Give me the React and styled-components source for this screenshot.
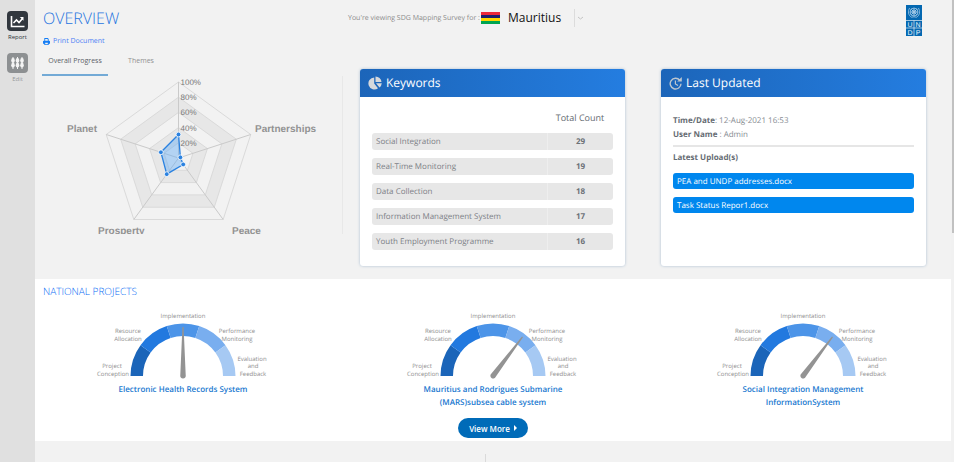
import React from "react";
import styled, { createGlobalStyle } from "styled-components";

const GlobalStyle = createGlobalStyle`
  * { box-sizing: border-box; }
  body {
    margin: 0;
    background: #f2f2f2;
    font-family: "Open Sans", "Noto Sans", sans-serif;
    color: #7c8086;
    overflow: hidden;
    text-rendering: geometricPrecision;
  }
  button, select { font-family: inherit; }
`;

const Page = styled.div`
  display: grid;
  grid-template-columns: 35px 1fr 3px;
  height: 100vh;
  overflow: hidden;
`;

const Sidebar = styled.nav`
  background: #e0e0e0;
  padding-top: 11px;
  display: flex;
  flex-direction: column;
  align-items: center;
  gap: 11px;
`;

const NavButton = styled.button`
  border: 0;
  padding: 0;
  background: none;
  display: flex;
  flex-direction: column;
  align-items: center;
  gap: 2px;
  font-size: 6px;
  line-height: 9px;
  color: ${(p) => (p.$active ? "#2f343a" : "#97999b")};
`;

const NavTile = styled.span`
  display: grid;
  place-items: center;
  width: 21px;
  height: 20px;
  border-radius: 4px;
  background: ${(p) => (p.$active ? "#31373e" : "#8d9092")};
`;

const Main = styled.main`
  min-width: 0;
  display: flex;
  flex-direction: column;
`;

const Columns = styled.div`
  display: grid;
  grid-template-columns: repeat(3, 1fr);
  padding: 0 6px 0 7px;
`;

const Header = styled(Columns)`
  height: 49px;
  flex: none;
`;

const TitleBlock = styled.div`
  padding: 8px 0 0 1px;
`;

const Title = styled.h1`
  margin: 0;
  font-weight: 300;
  font-size: 16px;
  line-height: 20px;
  color: #1f74e0;
`;

const PrintLink = styled.a`
  display: flex;
  align-items: center;
  gap: 3px;
  margin-top: 7px;
  font-size: 7px;
  line-height: 13px;
  color: #4b7df5;
  text-decoration: none;
`;

const CountryPicker = styled.div`
  display: flex;
  align-items: center;
  align-self: start;
  height: 35px;
  padding-left: 5px;
  white-space: nowrap;
`;

const PickerLabel = styled.label`
  font-size: 7px;
  width: 133px;
  line-height: 12px;
  padding-top: 2px;
  color: #8b8b8b;
`;

const CountrySelect = styled.select`
  appearance: none;
  border: 0;
  border-right: 1px solid #dcdcdc;
  background: transparent;
  height: 18px;
  width: 69px;
  margin: 0 3px 0 6px;
  padding: 0 0 0 2px;
  font-size: 12px;
  color: #111;
`;

const LogoSlot = styled.div`
  display: flex;
  justify-content: flex-end;
  padding: 5px 23px 0 0;
`;

const Overview = styled(Columns)`
  height: 230px;
  flex: none;
`;

const ChartPanel = styled.section`
  display: flex;
  flex-direction: column;
`;

const Tabs = styled.div`
  display: flex;
`;

const Tab = styled.button`
  border: 0;
  border-bottom: 2px solid ${(p) => (p.$active ? "#73aad6" : "transparent")};
  background: none;
  width: 66px;
  height: 27px;
  padding: 0 0 2px;
  font-size: 7px;
  color: ${(p) => (p.$active ? "#5b6168" : "#919191")};
`;

const RadarFrame = styled.div`
  height: 158px;
  overflow: hidden;
  border-right: 1px solid #e8e8e8;
`;

const Card = styled.section`
  margin: 20px 19px 0 17px;
  height: 197px;
  display: flex;
  flex-direction: column;
  background: #fff;
  border-radius: 3px;
  box-shadow: 0 0 3px #a9bdd2;
  overflow: hidden;
`;

const CardHeader = styled.header`
  display: flex;
  align-items: center;
  gap: 4px;
  height: 28px;
  flex: none;
  padding-left: 8px;
  background: linear-gradient(90deg, #1c65b9, #247de0);
  color: #fff;
`;

const CardTitle = styled.h2`
  margin: 0;
  font-size: 12px;
  line-height: 16px;
  font-weight: 400;
`;

const KeywordTable = styled.table`
  flex: none;
  width: auto;
  margin: 4px 12px 0;
  border-collapse: separate;
  border-spacing: 0 8px;
  font-size: 8px;
  line-height: 15px;
`;

const HeadCell = styled.th`
  width: ${(p) => p.$width || "auto"};
  height: 16px;
  padding: 0;
  font-weight: 400;
  font-size: 9px;
  color: #666c73;
`;

const KeywordCell = styled.td`
  padding: 1px 4px;
  background: #e7e7e7;
  border-radius: 3px 0 0 3px;
`;

const CountCell = styled.td`
  padding: 1px 0;
  background: #e7e7e7;
  border-left: 1px solid #eee;
  border-radius: 0 3px 3px 0;
  text-align: center;
  font-weight: 700;
  color: #6c7177;
`;

const UpdateBody = styled.div`
  padding: 17px 12px;
  font-size: 8px;
`;

const UpdateLine = styled.p`
  margin: 0;
  line-height: 14px;
  color: #868b91;
  b { color: #666c73; }
`;

const Divider = styled.hr`
  margin: 3px 0 4px;
  border: 0;
  height: 2px;
  background: #e6e6e6;
`;

const UploadList = styled.div`
  display: flex;
  flex-direction: column;
  gap: 8px;
  margin-top: 8px;
`;

const UploadLink = styled.a`
  height: 16px;
  padding: 0 4px;
  border-radius: 3px;
  background: #0087ee;
  color: #fff;
  font-size: 8px;
  line-height: 17px;
  text-decoration: none;
`;

const Projects = styled.section`
  background: #fff;
  flex: none;
  height: 162px;
  display: flex;
  flex-direction: column;
`;

const ProjectsTitle = styled.h2`
  margin: 4px 0 0 8px;
  font-size: 10px;
  line-height: 16px;
  font-weight: 300;
  color: #0a6df5;
`;

const GaugeRow = styled.div`
  display: grid;
  grid-template-columns: repeat(3, 1fr);
  gap: 20px;
  padding: 10px 3px 0;
  height: 119px;
`;

const GaugeItem = styled.article`
  display: flex;
  flex-direction: column;
  align-items: center;
`;

const GaugeTitle = styled.h3`
  margin: 3px 0 0;
  width: 146px;
  text-align: center;
  font-size: 8px;
  line-height: 13px;
  font-weight: 600;
  color: #1978cf;
`;

const MoreButton = styled.button`
  align-self: center;
  display: flex;
  align-items: center;
  justify-content: center;
  gap: 4px;
  width: 70px;
  height: 20px;
  flex: none;
  border: 0;
  border-radius: 10px;
  background: #006bb8;
  color: #fff;
  font-size: 8px;
  font-weight: 600;
`;

const Below = styled.div`
  flex: 1;
  display: grid;
  grid-template-columns: 451px 1fr;
  padding-top: 13px;
`;

const BelowPanel = styled.div`
  border-right: 1px solid #dadada;
`;

const ScrollTrack = styled.div`
  background: #f1f1f1;
  padding-left: 1px;
`;

const ScrollThumb = styled.div`
  height: 233px;
  background: #c1c1c1;
`;

function point(cx, cy, r, deg) {
  const a = (deg * Math.PI) / 180;
  return [cx + r * Math.sin(a), cy - r * Math.cos(a)];
}

function ring(cx, cy, r) {
  return [0, 1, 2, 3, 4].map((i) => point(cx, cy, r, i * 72).join(",")).join(" ");
}

function Radar() {
  const cx = 136.5;
  const cy = 82;
  const values = [23.5, 2, 8, 20, 18.5];
  const dots = values.map((v, i) => point(cx, cy, v, i * 72));
  return (
    <svg width="290" height="168" role="img" aria-label="Overall progress" fontFamily="'Liberation Sans', Arial, sans-serif">
      {[5, 4, 3, 2, 1].map((n) => (
        <polygon
          key={n}
          points={ring(cx, cy, n * 15.2)}
          fill={n % 2 ? "#f2f2f2" : "#e7e7e7"}
          stroke="#dadada"
        />
      ))}
      {[0, 1, 2, 3, 4].map((i) => {
        const [x, y] = point(cx, cy, 76, i * 72);
        return <line key={i} x1={cx} y1={cy} x2={x} y2={y} stroke="#cacaca" strokeWidth="1" />;
      })}
      <polygon points={dots.map((d) => d.join(",")).join(" ")} fill="#67aef3" fillOpacity="0.45" stroke="#2b82e0" strokeWidth="1.3" />
      {dots.map(([x, y], i) => (
        <circle key={i} cx={x} cy={y} r="2.4" fill="#2b82e0" stroke="#fff" strokeWidth="0.8" />
      ))}
      <g fontSize="8" fill="#777">
        {["20%", "40%", "60%", "80%", "100%"].map((t, i) => (
          <text key={t} x={cx + 2} y={cy + 3 - (i + 1) * 15.2}>{t}</text>
        ))}
      </g>
      <g fontSize="10" fontWeight="700" fill="#929292">
        <text x="55" y="56" textAnchor="end">Planet</text>
        <text x="213" y="56">Partnerships</text>
        <text x="56" y="158">Prosperty</text>
        <text x="190" y="158">Peace</text>
      </g>
    </svg>
  );
}

const SEGMENTS = ["#1b65b9", "#2279df", "#4c94e8", "#79aeef", "#a6c9f3"];

function Gauge({ angle, name }) {
  const cx = 90;
  const cy = 67;
  return (
    <svg width="180" height="71" role="img" aria-label={name}>
      {SEGMENTS.map((fill, i) => {
        const a = -90 + i * 36;
        const [x1, y1] = point(cx, cy, 52.5, a);
        const [x2, y2] = point(cx, cy, 52.5, a + 36);
        const [x3, y3] = point(cx, cy, 40, a + 36);
        const [x4, y4] = point(cx, cy, 40, a);
        return (
          <path
            key={fill}
            d={`M${x1} ${y1}A52.5 52.5 0 0 1 ${x2} ${y2}L${x3} ${y3}A40 40 0 0 0 ${x4} ${y4}Z`}
            fill={fill}
          />
        );
      })}
      <path
        transform={`rotate(${angle} ${cx} ${cy})`}
        d="M89.4 18h1.2l2.1 48a2.8 2.8 0 1 1-5.4 0z"
        fill="#939393"
      />
      <g fontSize="6" fill="#8d8d8d" textAnchor="middle">
        <text x="90" y="9">Implementation</text>
        <text x="35" y="24">Resource</text>
        <text x="35" y="32">Allocation</text>
        <text x="144" y="24">Performance</text>
        <text x="144" y="32">Monitoring</text>
        <text x="19" y="59">Project</text>
        <text x="20" y="67">Conception</text>
        <text x="159" y="52">Evaluation</text>
        <text x="160" y="59">and</text>
        <text x="160" y="67">Feedback</text>
      </g>
    </svg>
  );
}

function ReportIcon() {
  return (
    <svg width="15" height="13" viewBox="0 0 15 13" fill="none" stroke="#fff" strokeWidth="1.6">
      <path d="M1.5 1v10.5h13M3.5 8l3-3 2.5 2.5 3.5-4" />
      <path d="M9.8 2h3.7v3.7z" fill="#fff" stroke="none" />
    </svg>
  );
}

function EditIcon() {
  return (
    <svg width="15" height="14" viewBox="0 0 15 14" fill="#f4f4f4">
      {[3, 7.5, 12].map((x) => (
        <g key={x}>
          <rect x={x - 0.5} y="1" width="1" height="12" />
          <ellipse cx={x} cy="4.5" rx="1.8" ry="2.4" />
          <ellipse cx={x} cy="9.2" rx="1.8" ry="2.4" />
        </g>
      ))}
    </svg>
  );
}

function PrinterIcon() {
  return (
    <svg width="7" height="7" viewBox="0 0 16 16" fill="#147df5">
      <path d="M3 0h8l2 2v4h-2V3h-1V2H5v4H3zM2 6h12a2 2 0 0 1 2 2v5h-3v3H3v-3H0V8a2 2 0 0 1 2-2zm3 5v3h6v-3z" />
    </svg>
  );
}

function Flag() {
  return (
    <svg width="19" height="12" viewBox="0 0 19 12" role="img" aria-label="Flag of Mauritius">
      <path fill="#ea2839" d="M0 0h19v3H0z" />
      <path fill="#1a206d" d="M0 3h19v3H0z" />
      <path fill="#ffd500" d="M0 6h19v3H0z" />
      <path fill="#00a551" d="M0 9h19v3H0z" />
    </svg>
  );
}

function UndpLogo() {
  return (
    <svg width="16" height="31" viewBox="0 0 16 31" role="img" aria-label="UNDP">
      <path fill="#0468b1" d="M0 0h16v31H0z" />
      <g fill="none" stroke="#b9d7ee" strokeWidth="0.7">
        <circle cx="8" cy="7" r="4" />
        <circle cx="8" cy="7" r="2" />
        <path d="M4 7h8M8 3v8M5.2 4.2l5.6 5.6M10.8 4.2L5.2 9.8" />
        <path d="M3.6 3C1.8 6 2 10.2 5.4 12.2L8 11.8l2.6.4C14 10.2 14.2 6 12.4 3" />
        <path d="M0 15.5h16M0 23h16M8 15.5v15.5" stroke="#e5f0f8" />
      </g>
      <g fontSize="7" fill="#e8f2fa" textAnchor="middle" fontFamily="'Liberation Sans', sans-serif">
        <text x="4" y="22">U</text>
        <text x="12" y="22">N</text>
        <text x="4" y="30">D</text>
        <text x="12" y="30">P</text>
      </g>
    </svg>
  );
}

function PieIcon() {
  return (
    <svg width="14" height="14" viewBox="0 0 14 14" fill="#d5d8dc">
      <path d="M6.2 1.4v6l3.8 4.8A6 6 0 1 1 6.2 1.4z" />
      <path d="M7.5 0.5a6 6 0 0 1 6 5.5h-6z" />
      <path d="M8 7.2h5.8a6 6 0 0 1-2.3 4.2z" />
    </svg>
  );
}

function HistoryIcon() {
  return (
    <svg width="13" height="13" viewBox="0 0 13 13" fill="none" stroke="#bcc6d0" strokeWidth="1.4">
      <path d="M10.8 3.2A5.4 5.4 0 1 0 12 6.8" />
      <path d="M6.4 3.6v3.3l2.6 1.6" strokeWidth="1.2" />
      <path d="M12.8 0v4.6H8.2z" fill="#bcc6d0" stroke="none" />
    </svg>
  );
}

const KEYWORDS = [
  ["Social Integration", 29],
  ["Real-Time Monitoring", 19],
  ["Data Collection", 18],
  ["Information Management System", 17],
  ["Youth Employment Programme", 16],
];

const PROJECTS = [
  { name: "Electronic Health Records System", angle: 0 },
  { name: "Mauritius and Rodrigues Submarine (MARS)subsea cable system", angle: 37 },
  { name: "Social Integration Management InformationSystem", angle: 37 },
];

export default function App() {
  return (
    <Page>
      <GlobalStyle />
      <Sidebar>
        <NavButton $active>
          <NavTile $active><ReportIcon /></NavTile>
          Report
        </NavButton>
        <NavButton>
          <NavTile><EditIcon /></NavTile>
          Edit
        </NavButton>
      </Sidebar>
      <Main>
        <Header as="header">
          <TitleBlock>
            <Title>OVERVIEW</Title>
            <PrintLink href="#print"><PrinterIcon />Print Document</PrintLink>
          </TitleBlock>
          <CountryPicker>
            <PickerLabel htmlFor="country">You're viewing SDG Mapping Survey for :</PickerLabel>
            <Flag />
            <CountrySelect id="country" defaultValue="Mauritius">
              <option>Mauritius</option>
            </CountrySelect>
            <svg width="5" height="4" viewBox="0 0 5 4" fill="none" stroke="#c4c4c4"><path d="M0 1l2.5 2L5 1" /></svg>
          </CountryPicker>
          <LogoSlot><UndpLogo /></LogoSlot>
        </Header>
        <Overview>
          <ChartPanel>
            <Tabs>
              <Tab $active>Overall Progress</Tab>
              <Tab>Themes</Tab>
            </Tabs>
            <RadarFrame><Radar /></RadarFrame>
          </ChartPanel>
          <Card>
            <CardHeader><PieIcon /><CardTitle>Keywords</CardTitle></CardHeader>
            <KeywordTable>
              <thead>
                <tr>
                  <HeadCell aria-label="Keyword" />
                  <HeadCell $width="66px">Total Count</HeadCell>
                </tr>
              </thead>
              <tbody>
                {KEYWORDS.map(([word, count]) => (
                  <tr key={word}>
                    <KeywordCell>{word}</KeywordCell>
                    <CountCell>{count}</CountCell>
                  </tr>
                ))}
              </tbody>
            </KeywordTable>
          </Card>
          <Card>
            <CardHeader><HistoryIcon /><CardTitle>Last Updated</CardTitle></CardHeader>
            <UpdateBody>
              <UpdateLine><b>Time/Date</b>: 12-Aug-2021 16:53</UpdateLine>
              <UpdateLine><b>User Name</b> : Admin</UpdateLine>
              <Divider />
              <UpdateLine><b>Latest Upload(s)</b></UpdateLine>
              <UploadList>
                <UploadLink href="#pea">PEA and UNDP addresses.docx</UploadLink>
                <UploadLink href="#task">Task Status Repor1.docx</UploadLink>
              </UploadList>
            </UpdateBody>
          </Card>
        </Overview>
        <Projects>
          <ProjectsTitle>NATIONAL PROJECTS</ProjectsTitle>
          <GaugeRow>
            {PROJECTS.map((p) => (
              <GaugeItem key={p.name}>
                <Gauge angle={p.angle} name={p.name} />
                <GaugeTitle>{p.name}</GaugeTitle>
              </GaugeItem>
            ))}
          </GaugeRow>
          <MoreButton>
            View More
            <svg width="3" height="6" viewBox="0 0 3 6"><path d="M0 0l3 3-3 3z" fill="#fff" /></svg>
          </MoreButton>
        </Projects>
        <Below><BelowPanel /></Below>
      </Main>
      <ScrollTrack><ScrollThumb /></ScrollTrack>
    </Page>
  );
}
